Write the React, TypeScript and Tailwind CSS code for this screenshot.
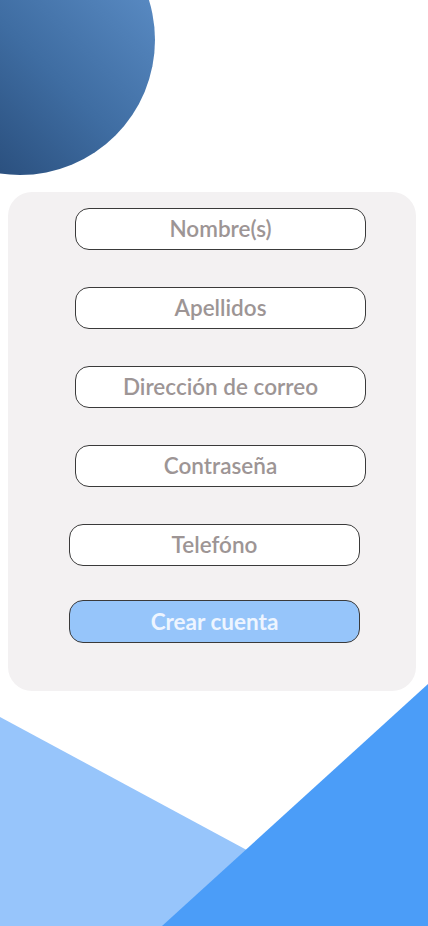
const fields = ["Nombre(s)", "Apellidos", "Dirección de correo", "Contraseña"];

export default function App() {
  return (
    <div className="relative h-[926px] w-[428px] overflow-hidden bg-white font-['Lato',sans-serif]">
      {/* decorative circle */}
      <div className="absolute left-[-115px] top-[-95px] h-[270px] w-[270px] rounded-full bg-gradient-to-tr from-[#1d3c66] via-[#3f6da2] to-[#6699d3]" />

      {/* decorative triangles */}
      <svg
        className="absolute left-0 top-0"
        width="428"
        height="926"
        viewBox="0 0 428 926"
      >
        <polygon points="0,717 388,926 0,926" fill="#97c5fb" />
        <polygon points="428,684 162,926 428,926" fill="#4b9df8" />
      </svg>

      <div className="relative ml-2 mr-3 mt-[192px] h-[499px] rounded-3xl bg-[#f3f1f2] pt-4">
        <div className="flex flex-col gap-[37px]">
          {fields.map((f) => (
            <div
              key={f}
              className="ml-[67px] flex h-[42px] w-[291px] items-center justify-center rounded-[14px] border border-[#3a3a3a] bg-white text-[22.5px] font-semibold text-[#9d9595]"
            >
              {f}
            </div>
          ))}
          <div className="ml-[61px] flex h-[42px] w-[291px] items-center justify-center rounded-[14px] border border-[#3a3a3a] bg-white text-[22.5px] font-semibold text-[#9d9595]">
            Telefóno
          </div>
        </div>
        <button className="ml-[61px] mt-[34px] flex h-[43px] w-[291px] items-center justify-center rounded-[14px] border border-[#3a3a3a] bg-[#96c5fa] text-[22.5px] font-bold text-[#eef5ff]">
          Crear cuenta
        </button>
      </div>
    </div>
  );
}
